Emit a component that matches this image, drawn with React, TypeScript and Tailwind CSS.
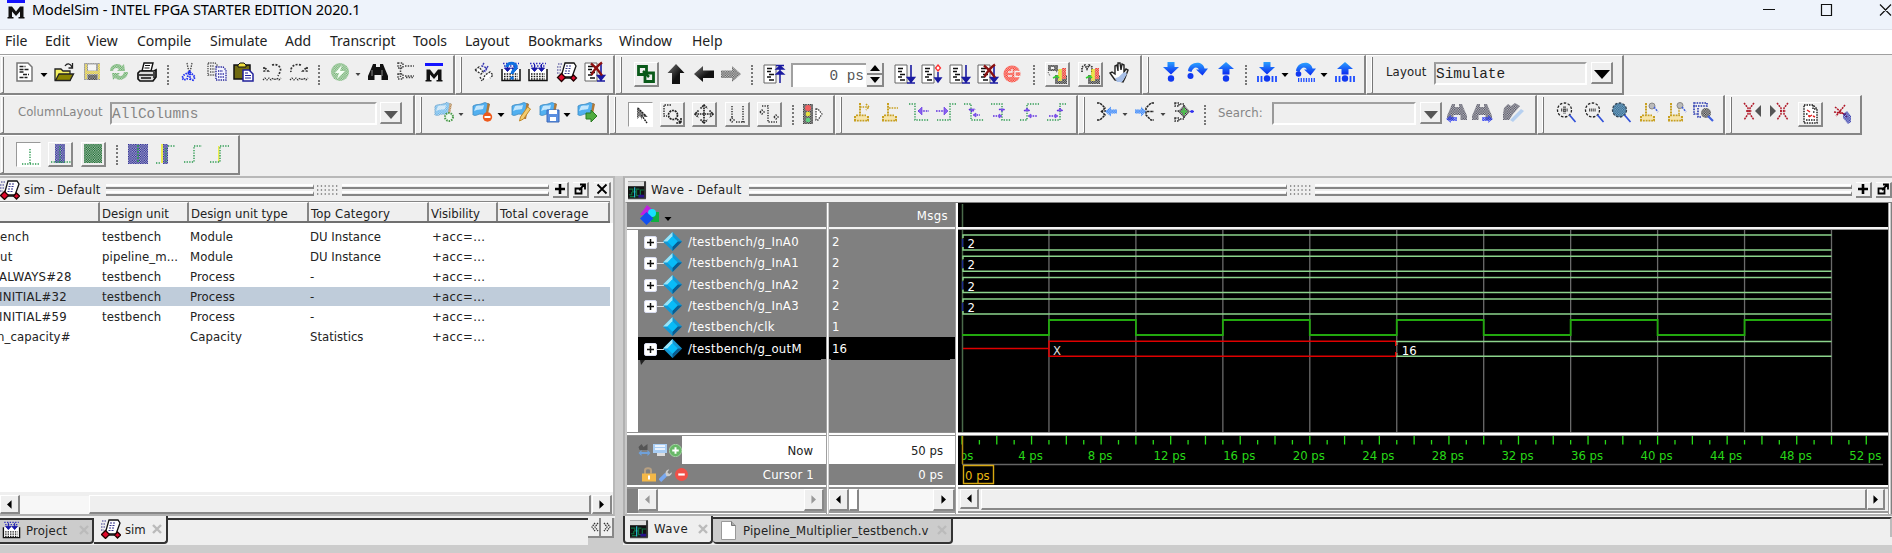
import React from "react";

type Kids = { children?: React.ReactNode };
type M = { m?: string };

const Ic = ({ m = "", up = true, children }: M & Kids & { up?: boolean }) => (
  <svg viewBox="0 0 20 20" className={`${m} ${up ? "mb-[5px]" : "mb-px"} h-5 w-5 shrink-0 overflow-visible`} fill="none">
    {children}
  </svg>
);
const Dith = ({ children }: Kids) => <g mask="url(#checker)">{children}</g>;
const Caret = ({ m = "", dim = false }: M & { dim?: boolean }) => (
  <svg viewBox="0 0 10 10" className={`${m} h-[10px] w-[10px] shrink-0`}>
    <path d={dim ? "M2.500 3h5L5 6z" : "M1.500 3h7L5 7z"} fill={dim ? "#444" : "#000"} />
  </svg>
);
const Sep = ({ m = "" }: M) => <div className={`${m} h-[20px] w-[2px] shrink-0 border-l-2 border-dotted border-[#777]`} />;
const Btn = ({ m = "", pressed = false, children }: M & Kids & { pressed?: boolean }) => (
  <div
    className={`${m} flex h-[25px] w-[25px] shrink-0 items-center justify-center ${
      pressed
        ? "border border-b-white border-r-white border-l-[#999] border-t-[#999] bg-white"
        : "border-b-2 border-l border-r-2 border-t border-b-[#888] border-l-white border-r-[#888] border-t-white bg-[#efefef]"
    }`}
  >
    {children}
  </div>
);
const Group = ({ w, first = false, children }: Kids & { w: string; first?: boolean }) => (
  <div className={`${w} flex h-10 shrink-0 items-center border-b-2 border-r-2 border-t border-b-[#858585] border-r-[#858585] border-t-white ${first ? "" : "border-l border-l-white"}`}>
    <div className={`${first ? "ml-[1px] w-[3px]" : "ml-1 w-[2px]"} h-[36px] shrink-0 border-b border-l border-r border-b-[#858585] border-l-white border-r-[#777]`} />
    {children}
  </div>
);
const Field = ({ m, text, dim = false }: { m: string; text?: string; dim?: boolean }) => (
  <div className={`${m} mb-[3px] flex h-[23px] shrink-0 items-center border-b-2 border-l-2 border-r-2 border-t-2 border-b-white border-l-[#999] border-r-white border-t-[#a0a0a0] pt-[3px] font-['Liberation_Mono',monospace] text-[14.4px] leading-none ${dim ? "text-[#858585]" : "text-[#222]"}`}>
    {text}
  </div>
);
const Drop = ({ m, dim = false }: { m: string; dim?: boolean }) => (
  <div className={`${m} mb-[3px] flex h-[22px] w-[22px] shrink-0 items-center justify-center border-b-2 border-l border-r-2 border-t border-b-[#888] border-l-white border-r-[#888] border-t-white`}>
    <svg viewBox="0 0 16 10" className="mt-1 h-[10px] w-4">
      {dim ? <path d="M1 1h14L8 9z" fill="#555" /> : <path d="M0 0h16L8 9z" fill="#000" />}
    </svg>
  </div>
);

const Doc = () => (
  <>
    <path d="M1 1h12v18H1z" fill="#fff" stroke="#666" />
    <path d="M4 4.500h5M4 7.500h4M6 10.500h5M4 13h4M6 16h5" stroke="#111" strokeWidth="1.400" />
  </>
);
const DownArr = () => <path d="M17 1v16M13.500 13.500h7L17 18zM13 19h8" stroke="#1a1aa0" strokeWidth="1.600" fill="#1a1aa0" />;
const RedX = () => <path d="M7 1.500c4 3 8 7 11 12M18 0.500C13 4 10 8 7.500 13" stroke="#8b1010" strokeWidth="2.400" />;

const MLogo = ({ m, up = true }: { m: string; up?: boolean }) => (
  <Ic m={m} up={up}>
    <path d="M1 1h18v3H1z" fill="#1414ff" />
    <path d="M2.500 19V7.500h3.500l4 5 4-5h3.500V19h-3.500v-6.500L10 17l-4-4.500V19z" fill="#111" />
    <path d="M1.500 18h6v1.500h-6zM12.500 18h6v1.500h-6z" fill="#111" />
  </Ic>
);
const SimIcon = () => (
  <>
    <path d="M1 2h5M0 5h5M0 8h4M0 11h3" stroke="#33338a" strokeWidth="1.200" strokeDasharray="1.500 1" />
    <path d="M8 1h9l2 3-4 11H4z" fill="#fff" stroke="#111" strokeWidth="1.300" />
    <path d="M9 4h6M8.500 6.500h6M8 9h6M7.500 11.500h5" stroke="#33338a" strokeDasharray="2 1" />
    <path d="M4.500 11.500l4 4-4 4-4-4zM16.500 13l3 3-3 3-3-3z" fill="#e0082c" stroke="#200" strokeWidth="1.300" />
    <path d="M8 16h6" stroke="#111" strokeWidth="1.500" />
  </>
);
const CompileIcon = () => (
  <>
    <path d="M2 1.500h16M3 4h14" stroke="#3030c0" strokeWidth="1.500" strokeDasharray="1.500 1.500" />
    <path d="M1 7v11.500h18V7" fill="#fff" stroke="#111" strokeWidth="1.500" />
    <path d="M3 12h14M3 14.500h14M3 17h14" stroke="#111" strokeWidth="1.500" strokeDasharray="1.500 1.200" />
    <path d="M6.500 2v5M3.500 6h6l-3 3.500zM13.500 2v5M10.500 6h6l-3 3.500z" stroke="#1818a8" fill="#1818a8" />
  </>
);
const WaveIcon = () => (
  <>
    <path d="M0 1h19v18H0z" fill="#111" />
    <path d="M0 1h17v5H0z" fill="#ddd" />
    <path d="M1 9h4v3h4V9h3M1 15h3v-3M9 12v4h4v-6h4M2 17h5" stroke="#0c7040" strokeWidth="1.300" />
    <path d="M7 7v11" stroke="#28b8d0" strokeWidth="1.300" />
    <path d="M11 15h6v3h-6z" fill="#28108c" />
    <path d="M18 1v18H0" stroke="#444" strokeWidth="1.500" />
  </>
);
const Flag = ({ children, dith = false }: Kids & { dith?: boolean }) => {
  const f = (
    <>
      <path d="M1 4c3-2 5-1 8-2s4-2 5-1l3 1-3 10c-4 1-6-1-9 1-2 1-5 0-4-1z" fill="#52b0f0" stroke="#3a88c0" strokeWidth=".8" />
      <path d="M4 4c3-1 5 0 8-1l-1 4c-3 1-5 0-9 2z" fill="#c4e6fc" />
      <path d="M15.500 1l2.500 1-3 15h-2z" fill="#b07838" />
    </>
  );
  return <>{dith ? <Dith>{f}</Dith> : f}{children}</>;
};
const Blue = ({ kind }: { kind: "down" | "over" | "up" }) => (
  <>
    {kind === "down" && <path d="M6.500 0h7v5h4.500L10 12.500 2 5h4.500z" fill="url(#blu)" />}
    {kind === "up" && <path d="M6.500 12.500h7V7H18L10 0 2 7h4.500z" fill="url(#blu)" />}
    {kind === "over" && <path d="M0 9C1-1 15-2 16.500 6.500H20L14.500 13.500 8 7.500h3C9 4 5 5 3.500 10z" fill="url(#blu)" />}
  </>
);
const Bars = () => <path d="M1 14v6M4.500 14v6M15.500 14v6M19 14v6" stroke="#1c4cff" strokeWidth="1.800" />;
const Wv = ({ d, p, q }: { d: string; p?: string; q?: string }) => (
  <>
    <path d={d} stroke="#2c9a50" strokeWidth="1.400" strokeDasharray="1.300 1.300" />
    {p && <path d={p} stroke="#6030e0" strokeWidth="1.400" strokeDasharray="1.600 1" />}
    {q && <path d={q} fill="#8a60f0" stroke="#6030e0" strokeWidth=".6" />}
  </>
);
const Ped = ({ d, x = 0 }: { d?: string; x?: number }) => (
  <>
    <path d={`M${8 + x} 1v12M4 13.500h10M2 18.500h15M3 14v5M16 14v5`} stroke="#c8a020" strokeWidth="2" strokeDasharray="2 .8" />
    <path d="M4 14h11v4H4z" fill="#f8e090" opacity=".7" />
    {d && <path d={d} stroke="#c8a020" strokeWidth="1.600" strokeDasharray="1.600 1" />}
  </>
);
const Mag = ({ sign, fill = "none", c = "#222" }: { sign?: string; fill?: string; c?: string }) => (
  <>
    <circle cx="8.500" cy="8" r="7" fill={fill} stroke={c} strokeWidth="1.300" strokeDasharray="2.500 1.500" />
    <path d="M13.500 13l6 7" stroke="#3050d8" strokeWidth="1.700" />
    {sign && <path d={sign} stroke="#555" strokeWidth="3" strokeDasharray="1.300 .8" />}
  </>
);
const Bino = ({ c }: { c: string }) => <path d="M5 2h3v3h4V2h3l2 5 3 7v4h-6.500v-5H6.500v5H0v-4l3-7z" fill={c} />;
const Traffic = () => (
  <>
    <Dith><path d="M8 11h12v9H8z" fill="#222" /><path d="M11 5h4v12h-4z" fill="#d8c800" /><path d="M15 4h4v11h-4z" fill="#f02010" /></Dith>
    <path d="M13 5v10" stroke="#f0e840" strokeWidth="1.500" />
    <path d="M6 14l4-2 2 2" stroke="#30d030" strokeWidth="1.700" />
  </>
);

function Defs() {
  return (
    <svg className="absolute h-0 w-0">
      <defs>
        <pattern id="chk" width="2.400" height="2.400" patternUnits="userSpaceOnUse">
          <rect width="2.400" height="2.400" fill="#3a3a3a" />
          <rect width="1.200" height="1.200" fill="#fff" />
          <rect x="1.200" y="1.200" width="1.200" height="1.200" fill="#fff" />
        </pattern>
        <mask id="checker" maskUnits="userSpaceOnUse" x="-2" y="-2" width="30" height="30">
          <rect x="-2" y="-2" width="30" height="30" fill="url(#chk)" />
        </mask>
        <linearGradient id="blu" x1="0" y1="0" x2="0" y2="1">
          <stop offset="0" stopColor="#2aa0ff" />
          <stop offset="1" stopColor="#0a28f0" />
        </linearGradient>
        <linearGradient id="dark" x1="0" y1="0" x2="1" y2="1">
          <stop offset="0" stopColor="#777" />
          <stop offset=".6" stopColor="#111" />
        </linearGradient>
      </defs>
    </svg>
  );
}

function RowOne() {
  return (
    <div className="flex h-10">
      <Group w="w-[455px]" first>
        <Ic m="ml-[10px]">
          <path d="M3 1h11l4 4v14H3z" fill="#fff" stroke="#777" strokeWidth="1.500" />
          <path d="M5.500 4.500h6M5.500 7.500h9M5.500 10h5M9 12.500h6M5.500 15.500h8" stroke="#222" strokeWidth="1.500" strokeDasharray="4 1" />
        </Ic>
        <Caret m="ml-[5px]" />
        <Ic m="ml-[5px]">
          <path d="M1 7h6l2 2h7v9H1z" fill="#f4f060" stroke="#222" strokeWidth="1.300" />
          <path d="M1.500 18.500L5 12h14.500L16 18.500z" fill="#8a8400" stroke="#222" strokeWidth="1.300" />
          <path d="M11 4c2-3 5-3 7 1M18.500 1v5h-4" stroke="#222" strokeWidth="1.300" />
        </Ic>
        <Ic m="ml-[8px]">
          <Dith><path d="M2 1h16v17H2z" fill="#777" /><path d="M3 9h14v3H3zM3 2h2v15H3zM16 2h2v15h-2z" fill="#d8c020" /><path d="M6 13h9v5H6z" fill="#222" /></Dith>
          <path d="M6 2.500h8v6H6z" fill="#f4f4f4" />
        </Ic>
        <Ic m="ml-[7px]">
          <Dith>
            <path d="M1 9c0-7 9-9 12-5l2-2 1 7-8 0 2-2c-3-2-5-1-6 2z" fill="#58a858" />
            <path d="M19 10c0 7-9 10-13 6l-2 2-1-7h8l-2 2c3 2 5 1 6-3z" fill="#58a858" />
          </Dith>
        </Ic>
        <Ic m="ml-[8px]">
          <path d="M7 1h9l-2 8H5z" fill="#fff" stroke="#111" strokeWidth="1.400" />
          <path d="M8 3.500h5M7.500 6h5" stroke="#111" />
          <path d="M3 9h14l2-1v7l-3 4H3l-2-2v-6z" fill="#ddd" stroke="#111" strokeWidth="1.700" />
          <path d="M2 13h14M4 16h10M17 10v6" stroke="#111" strokeWidth="1.500" />
        </Ic>
        <Sep m="ml-[10px]" />
        <Ic m="ml-[10px]">
          <path d="M8 1l1 5 2 5M13 1l-1 5-2 5" stroke="#444" strokeWidth="1.300" strokeDasharray="1.500 1" />
          <path d="M10 10l-5 3-2 3 2 2 3-1zM11 10l3 3 2 2-2 3-3-1z" stroke="#2030f0" strokeWidth="1.900" strokeDasharray="1.500 1" />
        </Ic>
        <Ic m="ml-[8px]">
          <path d="M1 1h7l2 2v10H1zM3 4h4M3 7h5M3 10h5" stroke="#555" strokeWidth="1.400" strokeDasharray="1.300 1" />
          <path d="M9 5h7l3 3v10H9z" fill="#f4f4ff" stroke="#20209a" strokeWidth="1.400" strokeDasharray="1.300 1" />
          <path d="M11 9h5M11 12h6M11 15h6" stroke="#20209a" strokeWidth="1.400" strokeDasharray="1.300 1" />
        </Ic>
        <Ic m="ml-[6px]">
          <path d="M1 3h16v14H1z" fill="#706a10" stroke="#111" strokeWidth="1.500" />
          <path d="M5 5V3l2-2h4l2 2v2z" fill="#f0e040" stroke="#111" />
          <path d="M10 8h6l4 4v7H10z" fill="#fff" stroke="#20209a" strokeWidth="1.500" />
          <path d="M12 11h3M12 13.500h6M12 16h6" stroke="#20209a" strokeWidth="1.200" />
        </Ic>
        <Ic m="ml-[9px]">
          <path d="M2 5v4h4L2 5M10 3c6-2 10 3 8 7l-2 4" stroke="#333" strokeWidth="1.700" strokeDasharray="2 1.400" />
          <path d="M1 18l2-2 2 2 2-2 2 2 2-2 2 2 2-2 2 2 2-2" stroke="#333" strokeWidth="1.200" strokeDasharray="1.500 1" />
        </Ic>
        <Ic m="ml-[7px]">
          <path d="M18 5v4h-4l4-4M12 3C6 1 1 5 2 10" stroke="#333" strokeWidth="1.700" strokeDasharray="2 1.400" />
          <path d="M1 18l2-2 2 2 2-2 2 2 2-2 2 2 2-2 2 2 2-2" stroke="#333" strokeWidth="1.200" strokeDasharray="1.500 1" />
        </Ic>
        <Sep m="ml-[9px]" />
        <Ic m="ml-[10px]">
          <Dith><circle cx="10" cy="10" r="9" fill="#68b068" /></Dith>
          <path d="M12 3l-7 8h4l-2 6 8-8h-5z" fill="#f4fff4" />
        </Ic>
        <Caret m="ml-[3px]" dim />
        <Ic m="ml-[5px]"><Bino c="#111" /><path d="M4 8v6M14 8v6" stroke="#888" /></Ic>
        <Ic m="ml-[7px]">
          <path d="M3 1h5v5H3zM3 12h5v5H3zM5.500 3v12M10 4h9M10 14h9M11 15.500h8" stroke="#444" strokeWidth="1.500" strokeDasharray="1.500 1.200" />
        </Ic>
        <MLogo m="ml-[9px]" />
      </Group>
      <Group w="w-[160px]">
        <Ic m="ml-[12px]">
          <path d="M1 8l4-3 4 5-2 2zM9 18l2-5 5-3 3 3-3 3M6 15l2 4" fill="#fff" stroke="#333" strokeWidth="1.400" strokeDasharray="2 1.200" />
          <path d="M10 1l-2 3 5 2-4 4M14 4l-3 6" stroke="#3838b0" strokeWidth="1.400" strokeDasharray="2 1" />
        </Ic>
        <Ic m="ml-[7px]"><CompileIcon /><path d="M6 5c0-5 9-5 9 0 0 3-4 3-4 7M11 14.500v3" stroke="#1070e0" strokeWidth="3.200" /></Ic>
        <Ic m="ml-[7px]"><CompileIcon /></Ic>
        <Ic m="ml-[9px]"><SimIcon /></Ic>
        <Ic m="ml-[7px]"><Doc /><DownArr /><RedX /></Ic>
      </Group>
      <Group w="w-[527px]">
        <Btn m="ml-[12px]">
          <svg viewBox="0 0 20 20" className="h-5 w-5" fill="none"><path d="M2.500 2.500h8v8h-8zM9 9h8.500v8.500H9z" stroke="#0a5a1a" strokeWidth="2.800" /><path d="M7 7l6 6" stroke="#0a5a1a" strokeWidth="2.500" /></svg>
        </Btn>
        <Ic m="ml-[7px]" up={false}><path d="M10 0l8.500 9H14v11H6V9H1.500z" fill="url(#dark)" /></Ic>
        <Ic m="ml-[8px]" up={false}><path d="M0 10l9-8v4.500h11v7.500H9V18z" fill="url(#dark)" /></Ic>
        <Ic m="ml-[7px]" up={false}><Dith><path d="M20 10l-9-8v4.500H0v7.500h11V18z" fill="#555" /></Dith></Ic>
        <Sep m="ml-[10px]" />
        <Ic m="ml-[10px]" up={false}><Doc /><path d="M17 2v17M13.500 5l3.500-3 3.500 3zM13.500 10l3.500-3 3.500 3zM13 1.500h8" stroke="#1a1aa0" strokeWidth="1.500" fill="#1a1aa0" /></Ic>
        <div className="ml-[8px] flex h-[24px] w-[75px] shrink-0 items-center justify-end border-l-2 border-t-2 border-l-[#a0a0a0] border-t-[#a0a0a0] bg-white pr-[2px] pt-[2px] font-['Liberation_Mono',monospace] text-[14.4px] leading-none text-[#555]">
          <span className="whitespace-pre">0 ps</span>
        </div>
        <div className="ml-px flex h-[24px] w-[17px] shrink-0 flex-col">
          <div className="flex flex-1 items-center justify-center border-b-2 border-r-2 border-b-[#888] border-r-[#888]"><svg viewBox="0 0 10 6" className="h-[6px] w-[10px]"><path d="M0 6h10L5 0z" /></svg></div>
          <div className="flex flex-1 items-center justify-center border-b-2 border-r-2 border-b-[#888] border-r-[#888]"><svg viewBox="0 0 10 6" className="h-[6px] w-[10px]"><path d="M0 0h10L5 6z" /></svg></div>
        </div>
        <Ic m="ml-[10px]" up={false}><Doc /><DownArr /></Ic>
        <Ic m="ml-[7px]" up={false}><Doc /><path d="M17 1l2.500 3L17 7l-2.500-3z" stroke="#ff3030" strokeWidth="1.300" fill="#fff" /><path d="M17 8v8M14 14h6l-3 4z" stroke="#1a1aa0" strokeWidth="1.500" fill="#1a1aa0" /></Ic>
        <Ic m="ml-[8px]" up={false}><Doc /><DownArr /></Ic>
        <Ic m="ml-[8px]" up={false}><Doc /><DownArr /><RedX /></Ic>
        <Ic m="ml-[5px]" up={false}>
          <Dith><circle cx="10" cy="10" r="8.500" fill="#ff2818" /></Dith>
          <path d="M10 5v3H6M6 12h4M18 7.500h-5v5h5" stroke="#f4f4f4" strokeWidth="1.300" />
        </Ic>
        <Sep m="ml-[11px]" />
        <Btn m="ml-[10px]">
          <svg viewBox="0 0 20 20" className="h-5 w-5" fill="none"><Dith><path d="M1 1h10v6H1z" fill="#222" /></Dith><path d="M4 3h3v2H4z" fill="#f4f4f4" /><path d="M1 8l2 4M9 8l2-1" stroke="#444" strokeDasharray="1 1" /><Traffic /></svg>
        </Btn>
        <Btn m="ml-[8px]">
          <svg viewBox="0 0 20 20" className="h-5 w-5" fill="none"><path d="M2 8V3l3-2 2 4 2-4 3 2v5" stroke="#333" strokeWidth="1.700" strokeDasharray="1.500 1" /><Traffic /></svg>
        </Btn>
        <Ic m="ml-[6px]">
          <path d="M6 18L1 11l2-1 3 2V4l2-1 1 6V1h2l1 7 1-6 2 1v7l2-3 2 1-3 8-2 4z" fill="#fff" stroke="#222" strokeWidth="1.400" />
          <path d="M6 16c5 0 5-4 10-6l2 2-5 8H8z" fill="#a8c0e8" />
        </Ic>
      </Group>
      <Group w="w-[224px]">
        <Ic m="ml-[12px]"><Blue kind="down" /><circle cx="10" cy="16.500" r="3.200" fill="#1038f0" /></Ic>
        <Ic m="ml-[7px]"><Blue kind="over" /><circle cx="2.500" cy="14" r="3" fill="#1038f0" /></Ic>
        <Ic m="ml-[8px]"><Blue kind="up" /><circle cx="10" cy="16.500" r="3.200" fill="#1038f0" /></Ic>
        <Sep m="ml-[9px]" />
        <Ic m="ml-[10px]"><Blue kind="down" /><circle cx="10" cy="16.500" r="3.200" fill="#1038f0" /><Bars /></Ic>
        <Caret m="ml-[3px]" />
        <Ic m="ml-[6px]"><Blue kind="over" /><circle cx="2.500" cy="12" r="2.800" fill="#1038f0" /><path d="M2 18h18" stroke="#1c4cff" strokeWidth="4" strokeDasharray="1.300 1.300" /></Ic>
        <Caret m="ml-[3px]" />
        <Ic m="ml-[6px]"><Blue kind="up" /><circle cx="10" cy="16.500" r="3.200" fill="#1038f0" /><Bars /></Ic>
      </Group>
      <Group w="w-[258px]">
        <div className="mb-[6px] ml-[13px] w-[48px] shrink-0 tracking-[0.1px]">Layout</div>
        <Field m="w-[153px]" text="Simulate" />
        <Drop m="ml-[4px]" />
      </Group>
    </div>
  );
}

function RowTwo() {
  return (
    <div className="flex h-10">
      <Group w="w-[415px]" first>
        <div className="mb-[6px] ml-[14px] w-[92px] shrink-0 text-[#858585]">ColumnLayout</div>
        <Field m="w-[267px]" text="AllColumns" dim />
        <Drop m="ml-[3px]" dim />
      </Group>
      <Group w="w-[194px]">
        <Ic m="ml-[12px]"><Flag dith><circle cx="15" cy="15" r="4" fill="#eef8ee" stroke="#4a9a4a" strokeWidth="2" strokeDasharray="1.500 1" /></Flag></Ic>
        <Caret m="ml-[2px]" dim />
        <Ic m="ml-[6px]"><Flag><circle cx="15.500" cy="15" r="4.700" fill="#ee5a1c" /><path d="M12.500 15h6" stroke="#fff" strokeWidth="2" /></Flag></Ic>
        <Caret m="ml-[4px]" />
        <Ic m="ml-[5px]"><Flag><path d="M16.500 5l3 2-7 10-4 2 1-4z" fill="#f4cc70" stroke="#c08828" /></Flag></Ic>
        <Ic m="ml-[8px]"><Flag><path d="M8 8h12v12H8z" fill="#5b8fe0" stroke="#3a68b8" /><path d="M10 8h8v4h-8zM11 15h6v4h-6z" fill="#fff" /></Flag></Ic>
        <Caret m="ml-[3px]" />
        <Ic m="ml-[5px]"><Flag><path d="M9 11h5V8l6 6-6 6v-3H9z" fill="#50ac40" stroke="#2a7a20" /></Flag></Ic>
      </Group>
      <Group w="w-[226px]">
        <Btn m="ml-[12px]" pressed>
          <svg viewBox="0 0 20 20" className="h-5 w-5" fill="none"><path d="M7 3l8 8-4 0 5 7" stroke="#222" strokeWidth="1.400" strokeDasharray="2 .8" /><Dith><path d="M6 2v12l3-3 2 4 0-5 4 1z" fill="#222" /></Dith></svg>
        </Btn>
        <Btn m="ml-[7px]">
          <svg viewBox="0 0 20 20" className="h-5 w-5" fill="none"><path d="M9 1H2v11h3" stroke="#333" strokeWidth="1.400" strokeDasharray="1.500 1" /><circle cx="11" cy="11" r="4.500" stroke="#222" strokeWidth="1.700" strokeDasharray="2 .8" /><path d="M15 15l4 4M19 14v5h-5" stroke="#222" strokeWidth="1.600" strokeDasharray="2 .6" /></svg>
        </Btn>
        <Btn m="ml-[7px]">
          <svg viewBox="0 0 20 20" className="h-5 w-5" fill="none"><path d="M10 1v18M1 10h18M6.500 4.500L10 1l3.500 3.500M6.500 15.500L10 19l3.500-3.500M4.500 6.500L1 10l3.500 3.500M15.500 6.500L19 10l-3.500 3.500" stroke="#222" strokeWidth="1.700" strokeDasharray="1.600 .8" /></svg>
        </Btn>
        <Btn m="ml-[8px]">
          <svg viewBox="0 0 20 20" className="h-5 w-5" fill="none"><path d="M5 2v12M16 2v17M3 16l2-2 2 2-2 2zM9 18h10" stroke="#333" strokeWidth="1.500" strokeDasharray="1.300 1.200" /></svg>
        </Btn>
        <Btn m="ml-[7px]">
          <svg viewBox="0 0 20 20" className="h-5 w-5" fill="none"><path d="M3 2h6v16h9M1 8l2-2 2 2-2 2zM15 13l2-2 2 2-2 2z" stroke="#333" strokeWidth="1.500" strokeDasharray="1.300 1.200" /></svg>
        </Btn>
        <Sep m="ml-[10px]" />
        <Ic m="ml-[9px]" up={false}>
          <Dith><path d="M0 0h10v20H0z" fill="#222" /></Dith>
          <circle cx="5" cy="4" r="3" fill="#f06060" /><circle cx="5" cy="10" r="2.300" fill="#e8e040" /><circle cx="5" cy="16" r="2.300" fill="#60d080" />
          <path d="M13 5h2l4 5-4 6h-2z" fill="#fff" stroke="#444" strokeWidth="1.300" strokeDasharray="1.500 1" />
        </Ic>
      </Group>
      <Group w="w-[243px]">
        <Ic m="ml-[10px]"><Ped d="M8 5h9M14 2l3 3-3 3" /></Ic>
        <Ic m="ml-[8px]"><Ped d="M9 6h9" /></Ic>
        <Ic m="ml-[9px]"><Wv d="M0 2h6v16h14" p="M9 9h11" q="M9 9l4-4v8z" /></Ic>
        <Ic m="ml-[7px]"><Wv d="M20 2h-6v16H1" p="M0 9h10" q="M12 9l-4-4v8z" /></Ic>
        <Ic m="ml-[8px]"><Wv d="M0 2h7v16h13" p="M5 7l3 3 3-3M10 13h6" q="M8 9l2-2H6zM12 11l-3 2 3 2z" /></Ic>
        <Ic m="ml-[7px]"><Wv d="M0 2h11v16h9" p="M2 14h8M8 7l3 2 3-2" q="M11 9l2-2H9zM8 12l3 2-3 2z" /></Ic>
        <Ic m="ml-[8px]"><Wv d="M1 18h7V2h12" p="M5 9l3-2 3 2M11 14h7" q="M8 6l2 3H6zM12 12l-3 2 3 2z" /></Ic>
        <Ic m="ml-[8px]"><Wv d="M0 18h13V2h6" p="M2 14h8M10 9l3-2 3 2" q="M13 6l2 3h-4zM8 12l3 2-3 2z" /></Ic>
      </Group>
      <Group w="w-[459px]">
        <Ic m="ml-[11px]"><path d="M1 1h3l5 5-3 3h4M1 18h3l5-5-4-4" stroke="#222" strokeWidth="1.500" strokeDasharray="2.500 .8" /><Dith><path d="M9 9.500l6-5v3h6v4h-6v3z" fill="#1070ff" /></Dith></Ic>
        <Caret m="ml-[4px]" dim />
        <Ic m="ml-[5px]"><path d="M19 1h-3l-5 5v7l5 5h3M12 9.500h7" stroke="#222" strokeWidth="1.500" strokeDasharray="2.500 .8" /><Dith><path d="M11 9.500l-5-5v3H0v4h6v3z" fill="#1070ff" /></Dith></Ic>
        <Caret m="ml-[3px]" dim />
        <Ic m="ml-[6px]"><path d="M1 1h4v3H1zM1 16h4v3H1zM1 9h4M6 2h4v3M6 17h4v-3" stroke="#333" strokeWidth="1.500" strokeDasharray="1.500 1" /><Dith><path d="M10 3l6 6.500-6 6.500-6-6.500z" fill="#222" /></Dith><path d="M10 6v7M7 9.500h6" stroke="#4cc04c" strokeWidth="2" /><path d="M16 9.500h4M18 8v3" stroke="#3030f0" strokeWidth="1.500" /></Ic>
        <Sep m="ml-[10px]" />
        <div className="mb-[5px] ml-[12px] w-[54px] shrink-0 tracking-[0.1px] text-[#858585]">Search:</div>
        <Field m="w-[144px]" />
        <Drop m="ml-[4px]" dim />
        <Ic m="ml-[5px]"><Dith><Bino c="#445" /></Dith><Dith><path d="M-1 17l5-4v2h6v4H4v2z" fill="#2030f0" /></Dith></Ic>
        <Ic m="ml-[5px]"><Dith><Bino c="#445" /></Dith><Dith><path d="M21 17l-5-4v2h-6v4h6v2z" fill="#2030f0" /></Dith></Ic>
        <Ic m="ml-[11px]"><Dith><path d="M1 6l4-4 3 2 4-3 5 3-7 8-4 6H0v-6z" fill="#445" /></Dith><path d="M7 18L18 7l3 2-11 11z" fill="#a8c8f0" opacity=".8" /></Ic>
      </Group>
      <Group w="w-[188px]">
        <Ic m="ml-[12px]"><Mag sign="M5 8h7M8.500 4.500v7" /></Ic>
        <Ic m="ml-[8px]"><Mag sign="M5 8h7" /></Ic>
        <Ic m="ml-[7px]"><Dith><circle cx="8.500" cy="8" r="7" fill="#205880" /></Dith><Mag fill="#2f77aa66" c="#345" /></Ic>
        <Ic m="ml-[7px]"><Ped /><circle cx="14" cy="4" r="3" fill="#bbb" stroke="#888" /><path d="M16 5l4 5" stroke="#4060e0" strokeWidth="1.500" strokeDasharray="2 1" /></Ic>
        <Ic m="ml-[8px]"><Ped x={-3} d="M13 3v11" /><circle cx="14" cy="3.500" r="3" fill="#bbb" stroke="#888" /><path d="M16 5l4 5" stroke="#4060e0" strokeWidth="1.500" strokeDasharray="2 1" /></Ic>
        <Ic m="ml-[7px]"><path d="M1 1h13v3H1zM1 4v8h4M5 6v9h4" stroke="#2838b0" strokeWidth="1.600" strokeDasharray="1.600 1" /><Dith><circle cx="13" cy="11" r="5" fill="#333" /></Dith><path d="M15 14l5 5" stroke="#4060e0" strokeWidth="2.200" /></Ic>
      </Group>
      <Group w="w-[137px]">
        <Ic m="ml-[11px]"><path d="M1 1l4 5v6l-4 6M11 1L7 6v6l4 6M3 9h6" stroke="#b01828" strokeWidth="1.500" strokeDasharray="2 .8" /><path d="M18 3v12l-6-6z" fill="#555" /></Ic>
        <Ic m="ml-[6px]"><path d="M8 1l4 5v6l-4 6M19 1l-4 5v6l4 6M11 9h6" stroke="#b01828" strokeWidth="1.500" strokeDasharray="2 .8" /><path d="M1 3v12l6-6z" fill="#555" /></Ic>
        <Btn m="ml-[9px]">
          <svg viewBox="0 0 20 20" className="h-5 w-5" fill="none"><path d="M4 1h9l4 4v14H4z" fill="#fff" stroke="#222" strokeWidth="1.500" strokeDasharray="1.500 1" /><path d="M6 16h9M6 10h2M13 8h2M13 1v4h4" stroke="#222" strokeWidth="1.500" strokeDasharray="1.500 1" /><path d="M7 6l3 2M9 13l3-2M13 12l2 1M8 12h2" stroke="#e02020" strokeWidth="1.500" /></svg>
        </Btn>
        <Ic m="ml-[10px]" up={false}><path d="M2 3l12 10M12 1L3 12M1 8l12 2" stroke="#b01828" strokeWidth="1.500" strokeDasharray="2 .8" /><Dith><path d="M10 10l4-3 4 5v6l-3 2-5-6z" fill="#2028a8" /></Dith></Ic>
      </Group>
    </div>
  );
}

function RowThree() {
  return (
    <div className="flex h-10">
      <Group w="w-[240px]" first>
        <Btn m="ml-[12px]" pressed><svg viewBox="0 0 22 22" className="h-[22px] w-[22px]" fill="none"><Wv d="M4 20h18M12 5v15" /></svg></Btn>
        <Btn m="ml-[7px]"><svg viewBox="0 0 22 22" className="h-[22px] w-[22px]" fill="none"><Dith><path d="M6 1h10v19H6z" fill="#18188a" /></Dith><Wv d="M2 19h20M11 3v17" /></svg></Btn>
        <Btn m="ml-[8px]"><svg viewBox="0 0 22 22" className="h-[22px] w-[22px]"><Dith><path d="M2 1h18v19H2z" fill="#005c18" /></Dith></svg></Btn>
        <Sep m="ml-[10px]" />
        <Ic m="ml-[10px]" up={false}><Dith><path d="M0 0h20v20H0z" fill="#18188a" /></Dith><path d="M10 1v18" stroke="#2c9a50" strokeWidth="1.500" strokeDasharray="2 1" /></Ic>
        <Ic m="ml-[8px]" up={false}><path d="M5 0h2v19H5z" fill="#ecec50" /><Dith><path d="M7 0h5v20H7z" fill="#18188a" /></Dith><Wv d="M0 19h4M12 2h7M10 4v14" /></Ic>
        <Ic m="ml-[7px]" up={false}><Wv d="M1 18h10V2h8" /></Ic>
        <Ic m="ml-[7px]" up={false}><path d="M8 2h1.500v16H8z" fill="#ecec50" /><Wv d="M0 18h10V2h9" /></Ic>
      </Group>
    </div>
  );
}

const Ridge = ({ w }: { w: string }) => (
  <div className={`${w} flex h-[12px] shrink-0 flex-col gap-[2px]`}>
    <div className="h-[5px] border-b-2 border-r border-t-2 border-b-[#858585] border-r-[#858585] border-t-white" />
    <div className="h-[5px] border-b-2 border-r border-t-2 border-b-[#858585] border-r-[#858585] border-t-white" />
  </div>
);
const Grip = () => (
  <svg viewBox="0 0 22 10" className="mx-[3px] h-[10px] w-[22px] shrink-0">
    <path d="M0 1h22M0 5h22M0 9h22" stroke="#777" strokeWidth="1.300" strokeDasharray="1.300 2.500" />
  </svg>
);
const TBtn = ({ m, children }: { m: string } & Kids) => (
  <div className={`${m} flex h-[16px] shrink-0 items-center justify-center border-b-2 border-r-2 border-t border-b-[#888] border-r-[#888] border-t-white`}>
    <svg viewBox="0 0 12 12" className="h-3 w-3" fill="none">{children}</svg>
  </div>
);
const Plus = () => <path d="M6 1v10M1 6h10" stroke="#000" strokeWidth="2.600" />;
const Pop = () => <path d="M1.500 5.500h6v5h-6zM5 7l5-5M6 1.500h5v5" stroke="#000" strokeWidth="1.800" />;

const SBtn = ({ m, left = false, dim = false }: { m: string; left?: boolean; dim?: boolean }) => (
  <div className={`${m} flex shrink-0 items-center justify-center border-b-2 border-l border-r-2 border-t border-b-[#888] border-l-white border-r-[#888] border-t-white bg-[#efefef]`}>
    <svg viewBox="0 0 6 10" className="h-[9px] w-[5px]"><path d={left ? "M5.500 0v10L0 5z" : "M.5 0v10L6 5z"} fill={dim ? "#999" : "#000"} /></svg>
  </div>
);
const Close = ({ m }: { m: string }) => (
  <svg viewBox="0 0 10 10" className={`${m} h-[10px] w-[10px] shrink-0`}><path d="M1 1l8 8M9 1L1 9" stroke="#bbb" strokeWidth="2.400" /></svg>
);

const simRows = [
  ["ench", "testbench", "Module", "DU Instance", "+acc=..."],
  ["ut", "pipeline_m...", "Module", "DU Instance", "+acc=..."],
  ["ALWAYS#28", "testbench", "Process", "-", "+acc=..."],
  ["INITIAL#32", "testbench", "Process", "-", "+acc=..."],
  ["INITIAL#59", "testbench", "Process", "-", "+acc=..."],
  ["n_capacity#", "", "Capacity", "Statistics", "+acc=..."],
];

function SimPanel() {
  const h = "flex h-full shrink-0 items-center border-r-2 border-r-[#858585] border-t border-t-white pl-[2px] pt-[2px]";
  return (
    <div className="flex h-[369px] w-[615px] shrink-0 flex-col">
      <div className="flex h-[340px] flex-col border-b-2 border-r-2 border-t-2 border-b-[#b0b0b0] border-r-[#b8b8b8] border-t-[#b8b8b8]">
        <div className="flex h-[23px] shrink-0 items-center">
          <svg viewBox="0 0 20 20" className="h-5 w-5 shrink-0" fill="none"><SimIcon /></svg>
          <span className="ml-[4px] w-[82px] shrink-0 tracking-[0.1px]">sim - Default</span>
          <Ridge w="w-[208px]" />
          <Grip />
          <Ridge w="w-[207px]" />
          <TBtn m="ml-[4px] w-[16px]"><Plus /></TBtn>
          <TBtn m="ml-[4px] w-[16px]"><Pop /></TBtn>
          <TBtn m="ml-[5px] w-[17px]"><path d="M1.500 1.500l9 9M10.500 1.500l-9 9" stroke="#000" strokeWidth="1.800" /></TBtn>
        </div>
        <div className="flex h-[22px] w-[610px] shrink-0 border-b-2 border-t border-b-[#707070] border-t-[#858585]">
          <div className={`${h} w-[100px]`} />
          <div className={`${h} w-[89px]`}>Design unit</div>
          <div className={`${h} w-[120px]`}>Design unit type</div>
          <div className={`${h} w-[120px] tracking-[0.2px]`}>Top Category</div>
          <div className={`${h} w-[69px]`}>Visibility</div>
          <div className={`${h} w-[112px] tracking-[0.25px]`}>Total coverage</div>
        </div>
        <div className="h-[269px] shrink-0 bg-white pt-[3px]">
          {simRows.map((r, i) => (
            <div key={i} className="h-5 w-[610px] py-px">
              <div className={`flex h-[19px] items-center ${i === 3 ? "bg-[#bfccda]" : ""}`}>
                <span className={`w-[102px] ${i === 5 ? "-ml-[3px] mr-[3px] tracking-[0.1px]" : "tracking-[0.25px]"} ${i === 2 ? "-ml-px mr-px tracking-[0.5px]" : ""} ${i === 3 || i === 4 ? "-ml-px mr-px" : ""}`}>{r[0]}</span>
                <span className="w-[88px] tracking-[0.1px]">{r[1]}</span>
                <span className="w-[120px] tracking-[0.1px]">{r[2]}</span>
                <span className="w-[122px]">{r[3]}</span>
                <span className="tracking-[0.3px]">{r[4]}</span>
              </div>
            </div>
          ))}
        </div>
        <div className="flex flex-1 items-end bg-[#efefef]">
          <SBtn m="h-[19px] w-[20px]" left />
          <div className="h-[18px] w-[69px] bg-[#f7f7f7]" />
          <div className="h-[19px] w-[502px] border-b-2 border-l border-r-2 border-t border-b-[#888] border-l-white border-r-[#888] border-t-white" />
          <SBtn m="ml-px h-[19px] w-[20px]" />
        </div>
      </div>
      <div className="flex h-[29px] w-full bg-[#efefef]">
        <div className="mt-[2px] flex h-[26px] w-[94px] shrink-0 items-center rounded-br border-b-2 border-r-2 border-t-2 border-[#333] bg-[#ccc] pb-[2px]">
          <svg viewBox="0 0 20 20" className="ml-[2px] h-[18px] w-[19px] shrink-0" fill="none"><CompileIcon /></svg>
          <span className="ml-[5px] w-[44px] tracking-[0.2px]">Project</span>
          <Close m="ml-[9px]" />
        </div>
        <div className="flex h-[28px] w-[74px] shrink-0 items-center rounded-br border-b-2 border-r-2 border-b-[#333] border-r-[#333] border-t-white">
          <svg viewBox="0 0 20 20" className="ml-[7px] h-5 w-5 shrink-0" fill="none"><SimIcon /></svg>
          <span className="ml-[4px] w-[22px]">sim</span>
          <Close m="ml-[5px]" />
        </div>
        <div className="mt-[2px] h-[20px] w-[420px] border-t-2 border-t-[#333]" />
        <div className="mt-[2px] flex h-[27px] w-[27px] items-start bg-[#ccc]">
          {["M6 1L3 5l3 4M9 1L6 5l3 4", "M2 1l3 4-3 4M5 1l3 4-3 4"].map((d) => (
            <div key={d} className="flex h-[20px] w-[13px] items-center justify-center border-b-2 border-r-2 border-b-[#888] border-r-[#888] bg-[#efefef]">
              <svg viewBox="0 0 10 10" className="h-[10px] w-[10px]" fill="none"><path d={d} stroke="#333" strokeDasharray="1.500 .7" strokeWidth="1.300" /></svg>
            </div>
          ))}
        </div>
      </div>
    </div>
  );
}

const signals: [string, string, boolean][] = [
  ["/testbench/g_InA0", "2", true],
  ["/testbench/g_InA1", "2", true],
  ["/testbench/g_InA2", "2", true],
  ["/testbench/g_InA3", "2", true],
  ["/testbench/clk", "1", false],
  ["/testbench/g_outM", "16", true],
];

function Names() {
  return (
    <div className="flex h-full w-[199px] shrink-0 flex-col">
      <div className="flex h-[24px] shrink-0 items-center bg-[#808080]">
        <svg viewBox="0 0 20 20" className="ml-[13px] h-5 w-5 shrink-0"><path d="M7 0l7 6-4 4H0z" fill="#c020e0" /><path d="M11 7h8v10h-8z" fill="#10b040" /><circle cx="12" cy="8" r="4" fill="#18e0ff" /><path d="M6.500 7l7 6.500-7 6.500-6.500-6.500z" fill="#1050f0" /></svg>
        <Caret m="ml-[3px] mt-[7px]" />
      </div>
      <div className="h-[3px] shrink-0 border-b border-b-[#909090] bg-[#f4f4f4]" />
      <div className="flex h-[202px] shrink-0 bg-white">
        <div className="ml-[11px] flex w-[188px] flex-col bg-[#808080] pt-[1px] text-white">
          {signals.map(([n, , plus], i) => (
            <div key={n} className={`flex h-[21.3px] shrink-0 items-center ${i === 5 ? "bg-black" : ""}`}>
              {plus ? (
                <>
                  <div className="ml-[6px] mt-[2px] flex h-[13px] w-[13px] shrink-0 items-center justify-center rounded-[2px] border border-[#d8dcf0] bg-white">
                    <svg viewBox="0 0 7 7" className="h-[7px] w-[7px]"><path d="M3.500 0v7M0 3.500h7" stroke="#111" strokeWidth="1.500" /></svg>
                  </div>
                  <div className="mt-[2px] h-px w-[7px] shrink-0 bg-[#ddd]" />
                </>
              ) : (
                <div className="w-[26px] shrink-0" />
              )}
              <svg viewBox="0 0 18 18" className="-ml-[1px] h-[19px] w-[19px] shrink-0">
                <path d="M9 0l9 9-9 9-9-9z" fill="#1498d4" /><path d="M9 0L0 9h5l4-5z" fill="#9ae4f8" /><path d="M9 18l9-9h-5l-4 5z" fill="#0a5c90" /><path d="M9 4l5 5-5 5-5-5z" fill="#08bcf8" />
              </svg>
              <span className="ml-[6px] whitespace-nowrap tracking-[0.3px]">{n}</span>
            </div>
          ))}
          <div className="mr-[5px] h-px bg-black" />
          <svg viewBox="0 0 6 5" className="ml-[2px] h-[5px] w-[6px]"><path d="M0 0h5L1 5z" fill="#222" /></svg>
        </div>
      </div>
      <div className="h-[4px] shrink-0 border-b border-t border-b-[#909090] border-t-[#909090] bg-white" />
      <div className="flex h-[28px] shrink-0 items-center bg-white text-[#222]">
        <div className="flex h-full w-[55px] items-center gap-[2px] bg-[#808080] pl-[11px]">
          <svg viewBox="0 0 12 12" className="h-[12px] w-[13px]"><path d="M0 3l3-3 2 3 4-3v6H1z" fill="#555" /><path d="M0 9l3-3v2h6V6l3 3-3 3v-2H3v2z" fill="#6fa0d8" /></svg>
          <svg viewBox="0 0 14 12" className="h-[12px] w-[14px]"><path d="M0 0h14v9H0z" fill="#a8cdf4" /><path d="M2 2h10M2 5h10" stroke="#fff" strokeWidth="1.500" /><path d="M4 9h8v3H4z" fill="#ddd" /></svg>
          <svg viewBox="0 0 12 12" className="h-[13px] w-[13px]"><circle cx="6" cy="6" r="5.700" fill="#68b868" stroke="#a8d8a8" strokeWidth=".8" /><path d="M6 3v6M3 6h6" stroke="#fff" strokeWidth="1.800" /></svg>
        </div>
        <span className="flex-1 pr-[13px] text-right">Now</span>
      </div>
      <div className="flex h-[21px] shrink-0 items-center gap-[3px] bg-[#808080] pl-[15px] text-white">
        <svg viewBox="0 0 14 14" className="h-[15px] w-[14px]" fill="none"><path d="M3 7V3c0-3 6-3 6 0v3" stroke="#b8a080" strokeWidth="2" /><path d="M0 6h14v8H0z" fill="#f4b848" /><path d="M6 8h2v4H6z" fill="#fff" /></svg>
        <svg viewBox="0 0 14 14" className="h-[14px] w-[13px]" fill="none"><path d="M1 13l7-7" stroke="#78a8f0" strokeWidth="4" /><path d="M7 6c0-4 2-5 4-5L9 4l2 2 3-2c0 3-3 5-6 4z" fill="#ccc" /></svg>
        <svg viewBox="0 0 12 12" className="h-[13px] w-[13px]"><circle cx="6" cy="6" r="6" fill="#f05048" /><path d="M3 6h6" stroke="#fff" strokeWidth="2" /></svg>
        <span className="flex-1 pr-[12px] text-right tracking-[0.2px]">Cursor 1</span>
      </div>
      <div className="h-[4px] shrink-0 border-b-2 border-b-[#909090] bg-white" />
      <div className="flex h-[24px] bg-[#808080] pl-[11px]">
        <div className="flex w-[188px] border-b-2 border-r-2 border-[#999]">
          <SBtn m="h-[22px] w-[20px]" left dim />
          <div className="flex-1 bg-[#f7f7f7]" />
          <SBtn m="h-[22px] w-[20px]" dim />
        </div>
      </div>
    </div>
  );
}

function Values() {
  return (
    <div className="flex h-full w-[126px] shrink-0 flex-col">
      <div className="flex h-[24px] shrink-0 items-center justify-end bg-[#808080] pr-[7px] tracking-[0.4px] text-white">Msgs</div>
      <div className="h-[3px] shrink-0 border-b border-b-[#909090] bg-[#f4f4f4]" />
      <div className="h-[202px] shrink-0 bg-[#808080] pt-[1px] text-white">
        {signals.map(([n, v], i) => (
          <div key={n} className={`flex h-[21.3px] items-center pl-[3px] ${i === 5 ? "bg-black" : ""}`}>{v}</div>
        ))}
        <div className="ml-[2px] mr-[5px] h-px bg-black" />
      </div>
      <div className="h-[4px] shrink-0 border-b border-t border-b-[#909090] border-t-[#909090] bg-white" />
      <div className="flex h-[28px] shrink-0 items-center justify-end bg-white pr-[12px] text-[#222]">50 ps</div>
      <div className="flex h-[21px] shrink-0 items-center justify-end bg-[#808080] pr-[12px] text-white">0 ps</div>
      <div className="h-[4px] shrink-0 border-b-2 border-b-[#909090] bg-white" />
      <div className="flex h-[24px] border-b-2 border-b-[#999]">
        <SBtn m="h-[22px] w-[20px]" left />
        <div className="h-[22px] w-[10px] border-b-2 border-l border-r-2 border-t border-b-[#888] border-l-white border-r-[#888] border-t-white" />
        <div className="flex-1 bg-[#f7f7f7]" />
        <SBtn m="h-[22px] w-[22px]" />
      </div>
    </div>
  );
}

const PS = 17.39;
const X0 = 4;
const px = (t: number) => X0 + t * PS;
const busRows = [5, 26.300, 47.500, 69];
const FF = "'DejaVu Sans Condensed','DejaVu Sans',sans-serif";

function Waves() {
  const clk = Array.from({ length: 10 }, (_, i) => `${i === 0 ? "M" : "L"}${px(i * 5)} ${i % 2 ? 90 : 105}L${px(i * 5 + 5)} ${i % 2 ? 90 : 105}`).join("");
  return (
    <div className="flex h-full w-[930px] shrink-0 flex-col">
      <svg className="h-[24px] w-full shrink-0 bg-black"><path d="M4.500 1v23" stroke="#4a6a4a" strokeWidth="1.500" /></svg>
      <div className="h-[3px] shrink-0 border-b border-b-[#909090] bg-[#f4f4f4]" />
      <svg viewBox="0 0 930 202" className="h-[202px] w-full shrink-0 bg-black" fill="none">
        {Array.from({ length: 10 }, (_, i) => (
          <path key={i} d={`M${px(i * 5 + 5)} 0v202`} stroke="#6a6a6a" strokeWidth="1.300" />
        ))}
        <path d="M4.500 0v202" stroke="#4a6a4a" strokeWidth="1.500" />
        {busRows.map((y) => (
          <g key={y}>
            <path d={`M5 ${y + 3}V${y}H${px(50)}M5 ${y + 12}v3H${px(50)}`} stroke="#8cd48c" strokeWidth="1.400" />
            <path d={`M4.500 ${y + 4}v8`} stroke="#1c2c90" strokeWidth="1.500" />
            <text x="9.500" y={y + 13} fill="#fff" fontFamily={FF} fontSize="13">2</text>
          </g>
        ))}
        <path d={clk} stroke="#22a80e" strokeWidth="1.800" />
        <path d={`M5 118.500H${px(5)}M${px(25)} 111.300H${px(5)}v15H${px(25)}`} stroke="#e00000" strokeWidth="1.500" />
        <path d={`M${px(25)} 115v-3.500H${px(50)}M${px(25)} 123v3.300H${px(50)}`} stroke="#8cd48c" strokeWidth="1.400" />
        <path d={`M${px(25) - 1} 112v4M${px(25) - 1} 122v4`} stroke="#e00000" strokeWidth="1.500" />
        <text x={px(5) + 4} y="124.500" fill="#ddd" fontFamily={FF} fontSize="13">X</text>
        <text x={px(25) + 5} y="124.500" fill="#fff" fontFamily={FF} fontSize="13">16</text>
      </svg>
      <div className="h-[4px] shrink-0 border-b border-t border-b-[#909090] border-t-[#909090] bg-white" />
      <svg viewBox="0 0 930 49" className="h-[49px] w-full shrink-0 bg-black" fill="none">
        {Array.from({ length: 53 }, (_, t) => (
          <path key={t} d={`M${px(t)} ${t % 2 ? 4 : 0}V8.500`} stroke="#28d818" strokeWidth="1.300" />
        ))}
        <svg x="4" width="925" height="30" overflow="hidden">
          {Array.from({ length: 14 }, (_, i) => (
            <text key={i} x={i * 4 * PS - 1} y="24" textAnchor="middle" fill="#28d818" fontFamily={FF} fontSize="13">{`${i * 4} ps`}</text>
          ))}
        </svg>
        <path d="M4 28.500H925" stroke="#666" strokeWidth="1.300" />
        <path d="M4.500 0v28" stroke="#b08c10" strokeWidth="1.500" />
        <path d="M5.500 29.500h30v18h-30z" stroke="#d8a810" strokeWidth="1.400" />
        <text x="7" y="44" fill="#e8b810" fontFamily={FF} fontSize="13">0 ps</text>
      </svg>
      <div className="h-[4px] shrink-0 border-b-2 border-b-[#909090] bg-white" />
      <div className="flex h-[24px] border-b-2 border-b-[#999] bg-[#efefef] pl-[2px]">
        <SBtn m="h-[20px] w-[19px]" left />
        <div className="ml-[2px] h-[21px] w-[886px] border-b-2 border-l border-r-2 border-t border-b-[#888] border-l-white border-r-[#888] border-t-white" />
        <SBtn m="h-[21px] w-[18px]" />
      </div>
    </div>
  );
}

function WavePanel() {
  return (
    <div className="flex h-[369px] w-[1269px] shrink-0 flex-col">
      <div className="flex h-[340px] flex-col border-b-2 border-l-2 border-t-2 border-b-[#b0b0b0] border-l-[#b0b0b0] border-t-[#b8b8b8] bg-[#efefef]">
        <div className="flex h-[24px] shrink-0 items-center pb-px pl-[3px]">
          <svg viewBox="0 0 20 20" className="h-[20px] w-[19px] shrink-0" fill="none"><WaveIcon /></svg>
          <span className="ml-[4px] w-[98px] shrink-0 tracking-[0.3px]">Wave - Default</span>
          <Ridge w="w-[538px]" />
          <Grip />
          <Ridge w="w-[537px]" />
          <TBtn m="ml-[4px] w-[16px]"><Plus /></TBtn>
          <TBtn m="ml-[4px] w-[16px]"><Pop /></TBtn>
        </div>
        <div className="flex h-[312px] border-l-2 border-t border-l-[#c8c8c8] border-t-[#808080] bg-white">
          <Names />
          <div className="w-[3px] shrink-0 border-l border-r border-l-[#a0a0a0] border-r-[#ccc] bg-white" />
          <Values />
          <div className="w-[3px] shrink-0 border-l border-l-[#a0a0a0] bg-white" />
          <Waves />
          <div className="w-[3px] shrink-0 border-l border-r border-l-[#a0a0a0] border-r-[#ccc] bg-white" />
          <div className="w-2 shrink-0 bg-[#808080]" />
        </div>
      </div>
      <div className="flex h-[29px] bg-[#efefef]">
        <div className="flex h-[28px] w-[90px] shrink-0 items-center rounded-b border-b-2 border-l-2 border-r-2 border-b-[#333] border-l-[#333] border-r-[#333] pb-px">
          <svg viewBox="0 0 20 20" className="ml-[5px] h-[20px] w-[19px] shrink-0" fill="none"><WaveIcon /></svg>
          <span className="ml-[5px] w-[40px] tracking-[0.6px]">Wave</span>
          <Close m="ml-[4px]" />
        </div>
        <div className="mt-[1px] flex h-[27px] w-[240px] shrink-0 items-center rounded-b border-b-2 border-r-2 border-t-2 border-[#333] bg-[#ccc] pb-px">
          <svg viewBox="0 0 15 19" className="ml-[8px] h-[19px] w-[15px] shrink-0"><path d="M.5.5h10l4 4v14H.5z" fill="#fff" stroke="#999" /><path d="M10.500.5v4h4" fill="#aaa" stroke="#777" /></svg>
          <span className="ml-[7px] w-[190px] whitespace-nowrap tracking-[0.15px]">Pipeline_Multiplier_testbench.v</span>
          <Close m="ml-[4px]" />
        </div>
        <div className="mt-[1px] h-[20px] flex-1 border-r-2 border-t-2 border-r-[#bbb] border-t-[#333]" />
      </div>
    </div>
  );
}

export default function App() {
  return (
    <div className="flex h-[553px] w-[1892px] flex-col overflow-hidden bg-[#ccc] font-['DejaVu_Sans_Condensed','DejaVu_Sans',sans-serif] text-[13px] leading-none text-[#222]">
      <Defs />
      <div className="flex h-[30px] shrink-0 items-start border-b border-b-[#dfe2ea] bg-[#eef3fb] font-['Noto_Sans',sans-serif] text-black">
        <div className="-mt-px ml-[6px]"><MLogo m="" up={false} /></div>
        <span className="ml-[6px] mt-[2px] flex-1 whitespace-nowrap text-[14.5px] tracking-[-0.12px]">ModelSim - INTEL FPGA STARTER EDITION 2020.1</span>
        <svg viewBox="0 0 130 20" className="h-5 w-[130px] shrink-0" fill="none">
          <path d="M1 9.500h12M59.500 4.500h10v11h-10zM118 4.500l11 11M129 4.500l-11 11" stroke="#111" strokeWidth="1.200" />
        </svg>
      </div>
      <div className="flex h-[25px] shrink-0 items-center border-b border-b-[#a0a0a0] bg-white pb-[2px] pl-[5px] font-['Noto_Sans',sans-serif] text-[14px] text-[#222]">
        <span className="w-[40px]">File</span>
        <span className="w-[42px]">Edit</span>
        <span className="w-[50px]">View</span>
        <span className="w-[73px]">Compile</span>
        <span className="w-[75px]">Simulate</span>
        <span className="w-[45px]">Add</span>
        <span className="w-[83px]">Transcript</span>
        <span className="w-[52px]">Tools</span>
        <span className="w-[63px]">Layout</span>
        <span className="w-[91px]">Bookmarks</span>
        <span className="w-[73px]">Window</span>
        <span>Help</span>
      </div>
      <div className="h-[121px] shrink-0 bg-[#efefef]">
        <RowOne />
        <RowTwo />
        <RowThree />
      </div>
      <div className="flex h-[369px] shrink-0 justify-between">
        <div className="bg-[#efefef]"><SimPanel /></div>
        <WavePanel />
      </div>
    </div>
  );
}
